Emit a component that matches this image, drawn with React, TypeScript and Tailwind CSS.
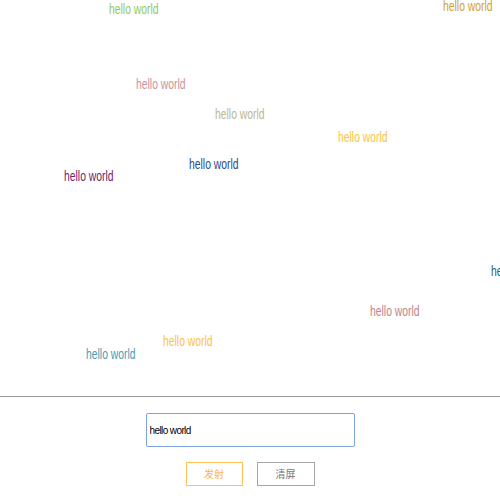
const bullets = [
  { left: 109, top: 1, color: "text-[#93c95b]" },
  { left: 443, top: -2, color: "text-[#d3a02c]" },
  { left: 136, top: 76, color: "text-[#c8949c]" },
  { left: 215, top: 106, color: "text-[#bcb88e]" },
  { left: 338, top: 129, color: "text-[#fdc24a]" },
  { left: 189, top: 156, color: "text-[#2b4a8c]" },
  { left: 64, top: 168, color: "text-[#6a1f6e]" },
  { left: 491, top: 263, color: "text-[#2e5d6c]" },
  { left: 370, top: 303, color: "text-[#c0848f]" },
  { left: 163, top: 333, color: "text-[#fcc23e]" },
  { left: 86, top: 346, color: "text-[#4b9cb2]" },
];

export default function App() {
  return (
    <main className="w-[500px] h-[500px] bg-white overflow-hidden font-['Liberation_Sans','Noto_Sans_CJK_SC',sans-serif]">
      <section className="relative h-[397px] border-b border-[#9a9a9a] overflow-hidden">
        {bullets.map((b, i) => (
          <span
            key={i}
            className={`absolute whitespace-nowrap text-[14px] leading-[16px] origin-left scale-x-[0.74] ${b.color}`}
            style={{ left: b.left, top: b.top }}
          >
            hello world
          </span>
        ))}
      </section>

      <div className="flex flex-col items-center pt-4">
        <input
          defaultValue="hello world"
          className="w-[209px] h-[34px] px-[3px] border border-[#7da2dc] rounded-[2px] text-[10px] tracking-[-0.6px] text-black outline-none"
        />
        <div className="flex gap-[14px] mt-[15px]">
          <button className="w-[57px] h-[24px] border border-[#fdc35a] text-[#fbb44a] text-[10px]">
            发射
          </button>
          <button className="w-[58px] h-[24px] border border-[#a6a6a6] text-[#777] text-[10px]">
            清屏
          </button>
        </div>
      </div>
    </main>
  );
}
